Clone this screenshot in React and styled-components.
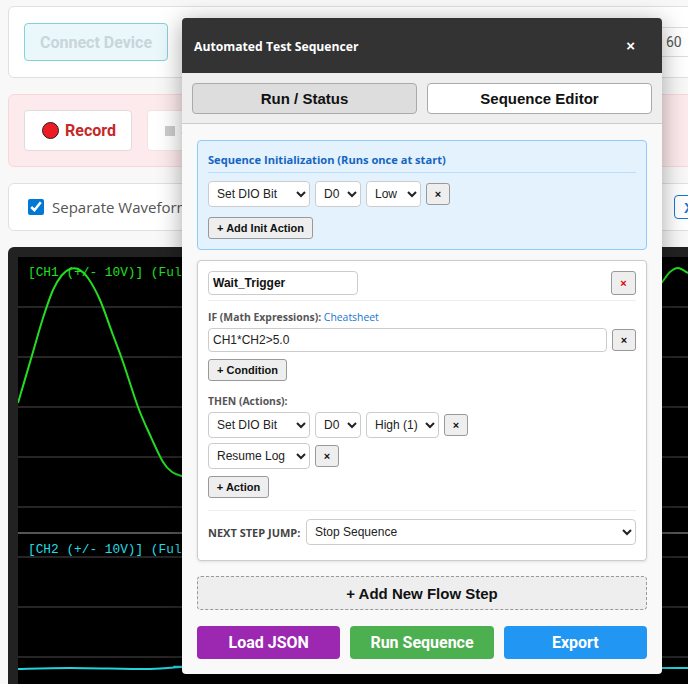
import React from "react";
import styled, { createGlobalStyle } from "styled-components";

const Global = createGlobalStyle`
  * { box-sizing: border-box; }
  html, body { margin: 0; height: 684px; overflow: hidden; background: #f8f8f8; }
  #root { position: relative; width: 688px; height: 684px; overflow: hidden; }
`;

const Page = styled.div`
  display: flex; flex-direction: column; gap: 16px;
  width: 740px; padding: 6px 0 0 8px;
  font-family: "Open Sans", sans-serif;
`;
const Card = styled.section`
  display: flex; align-items: center; justify-content: space-between;
  height: ${p => p.$h}px; padding: 0 15px;
  background: ${p => p.$tint ? "#fdeaec" : "#fff"};
  border: 1px solid ${p => p.$tint ? "#f8d7da" : "#e0e0e0"};
  border-radius: 6px;
`;
const Group = styled.div`display: flex; align-items: center; gap: 15px;`;
const ConnectButton = styled.button`
  width: 144px; height: 38px; padding: 0; background: #ebf8fb; border: 1px solid #84d2da; border-radius: 4px;
  color: #c9d5d9; font: 700 16px Roboto, sans-serif;
`;
const RateInput = styled.div`
  width: 76px; height: 30px; padding: 0 0 0 17px;
  display: flex; align-items: center; border: 1px solid #ddd; color: #555;
  font: 14px Roboto, sans-serif;
`;
const RecordButton = styled.button`
  display: flex; align-items: center; justify-content: flex-start; gap: 6px;
  width: ${p => p.$w}px; height: 41px; padding: 0 0 0 ${p => p.$pad}px; background: #fff;
  border: 1px solid ${p => p.$off ? "#f3e3e4" : "#ddd"}; border-radius: 4px;
  color: ${p => p.$off ? "#ccc" : "#c62828"}; font: 700 16px Roboto, sans-serif;
`;
const RecDot = styled.span`
  flex: none; width: 17px; height: 17px; border-radius: 50%; background: #ed1c24; border: 1px solid #222;
`;
const StopSquare = styled.span`flex: none; width: 10px; height: 10px; background: #ccc;`;
const CheckLabel = styled.label`
  display: flex; align-items: center; gap: 8px; margin-left: 4px;
  font-size: 15px; color: #555; white-space: nowrap;
`;
const Check = styled.input`
  width: 16px; height: 16px; margin: 0; accent-color: #0078d4;
`;
const SmallBlue = styled.button`
  width: 50px; height: 24px; padding: 0 0 0 9px; text-align: left; background: #fff;
  border: 1px solid #1976d2; border-radius: 4px; color: #1976d2;
  font: 700 15px "Liberation Sans", sans-serif;
`;

const Scope = styled.div`
  height: 460px; padding: 10px 0 0 10px; background: #222; border-radius: 6px 6px 0 0;
`;
const Channel = styled.div`
  position: relative; height: ${p => p.$h}px; background: #000;
  border-top: ${p => p.$divided ? "2px solid #555" : "none"};
`;
const ChannelLabel = styled.span`
  position: absolute; left: 10px; top: ${p => p.$top}px;
  font: 12.8px "Liberation Mono", monospace; color: ${p => p.$c}; white-space: pre;
`;
const Trace = styled.svg`display: block;`;

const Modal = styled.div`
  position: absolute; left: 182px; top: 18px; width: 480px; height: 656px;
  display: flex; flex-direction: column; background: #f9f9f9;
  border-radius: 4px; overflow: hidden;
  box-shadow: 0 4px 24px rgba(0,0,0,.35);
  font-family: "Open Sans", sans-serif;
`;
const ModalHeader = styled.header`
  flex: none; height: 55px; padding: 2px 27px 0 12px; display: flex; align-items: center; justify-content: space-between;
  background: #333; color: #fff;
`;
const ModalTitle = styled.h2`margin: 0; font-size: 12.2px; font-weight: 700;`;
const CloseButton = styled.button`
  padding: 0; margin-top: -3px; background: none; border: 0; color: #fff; font: 700 15px "Liberation Sans", sans-serif;
`;
const TabBar = styled.nav`
  flex: none; height: 51px; padding: 10px; display: grid; grid-template-columns: 1fr 1fr; gap: 10px;
  background: #eee; border-bottom: 1px solid #ccc;
`;
const Tab = styled.button`
  height: 31px; padding: 0; background: ${p => p.$active ? "#fff" : "#ddd"};
  border: 1px solid #aaa; border-radius: 4px; color: #111;
  font: 700 15px "Liberation Sans", sans-serif;
`;
const ModalBody = styled.div`
  flex: 1; padding: 16px 15px 15px; display: flex; flex-direction: column;
`;
const InitBox = styled.div`
  height: 110px; padding: 10px; margin-bottom: 10px;
  background: #e3f2fd; border: 1px solid #90caf9; border-radius: 4px;
`;
const InitTitle = styled.div`
  height: 22px; padding-bottom: 5px; margin-bottom: 8px; border-bottom: 1px solid #bbdefb;
  color: #1565c0; font-size: 11.1px; font-weight: 700; line-height: 17px; white-space: nowrap;
`;
const Row = styled.div`
  display: flex; align-items: center; gap: 5px; margin-bottom: ${p => p.$mb ?? 0}px;
`;
const Select = styled.select`
  width: ${p => p.$w}px; height: 26px; padding: 0 4px; background: #fff;
  border: 1px solid #ccc; border-radius: 4px; color: #222;
  font: 12px "Liberation Sans", sans-serif;
`;
const MiniButton = styled.button`
  display: block; flex: none; width: ${p => p.$w || 24}px; height: ${p => p.$tall ? 24 : 22}px; padding: 0; background: #eee;
  border: 1px solid #999; border-radius: 3px; color: ${p => p.$danger ? "#e00000" : "#111"};
  font: 700 11px "Liberation Sans", sans-serif;
`;
const StepCard = styled.div`
  height: 301px; padding: 10px; background: #fff; border: 1px solid #ccc; border-radius: 4px;
  box-shadow: 0 1px 3px rgba(0,0,0,.1);
`;
const StepHead = styled.div`
  display: flex; align-items: center; justify-content: space-between;
  height: 30px; padding-bottom: 5px; margin-bottom: 10px; border-bottom: 1px solid #eee;
`;
const NameInput = styled.input`
  width: 150px; height: 24px; padding: 0 4px; background: #fff; border: 1px solid #ccc; border-radius: 4px;
  color: #111; font: 700 12px "Liberation Sans", sans-serif;
`;
const FieldLabel = styled.div`
  height: 13px; margin: ${p => p.$top ?? 0}px 0 4px; color: #555; font-size: 10.4px; font-weight: 700; line-height: 13px; white-space: nowrap;
`;
const CheatLink = styled.a`color: #1976d2; font-weight: 400; text-decoration: none;`;
const ExprInput = styled.input`
  flex: 1; height: 24px; padding: 0 4px; background: #fff; border: 1px solid #ccc; border-radius: 4px;
  color: #222; font: 12px "Liberation Sans", sans-serif;
`;
const NextRow = styled.div`
  display: flex; align-items: center; justify-content: space-between; margin-top: 12px; padding-top: 8px; border-top: 1px solid #eee;
`;
const NextLabel = styled.span`
  margin-top: 1px; color: #444; font-size: 11px; font-weight: 700; white-space: nowrap;
`;
const AddStep = styled.button`
  flex: none; height: 34px; margin-top: 15px; padding: 0; background: #eee;
  border: 1px dashed #999; border-radius: 4px; color: #111;
  font: 700 15px "Liberation Sans", sans-serif;
`;
const Footer = styled.div`
  display: grid; grid-template-columns: repeat(3, 1fr); gap: 10px; margin-top: 16px;
`;
const ActionButton = styled.button`
  height: 33px; padding: 0; background: ${p => p.$bg}; border: 0; border-radius: 4px; color: #fff;
  font: 700 16px Roboto, sans-serif;
`;

const smooth = pts => {
  let d = `M${pts[0][0]} ${pts[0][1]}`;
  for (let i = 0; i < pts.length - 1; i++) {
    const a = pts[i - 1] || pts[i], b = pts[i], c = pts[i + 1], e = pts[i + 2] || c;
    d += ` C${b[0] + (c[0] - a[0]) / 6} ${b[1] + (c[1] - a[1]) / 6} ${c[0] - (e[0] - b[0]) / 6} ${c[1] - (e[1] - b[1]) / 6} ${c[0]} ${c[1]}`;
  }
  return d;
};

/* points are in channel coordinates (origin: top-left of the black plot) */
const green = [[0,146],[15,95],[25,61],[35,33],[44,18],[52,12],[60,12],[70,21],[82,43],[95,78],[105,105],[120,150],[132,178],[145,205],[154,215],[164,219],[180,222]];
const greenRight = [[640,30],[645,24],[652,15],[660,11],[670,16]];
const cyan = [[0,135],[52,134],[132,135],[164,133],[200,133],[640,134],[670,134]];

const Grid = ({ ys }) => ys.map(y => <line key={y} x1="0" x2="720" y1={y} y2={y} stroke="#262626" strokeWidth="1.8" />);

function ActionSelects({ third, thirdW }) {
  return (
    <>
      <Select $w={102} defaultValue="Set DIO Bit"><option>Set DIO Bit</option></Select>
      <Select $w={46} defaultValue="D0"><option>D0</option></Select>
      <Select $w={thirdW} defaultValue={third}><option>{third}</option></Select>
    </>
  );
}

export default function App() {
  return (
    <>
      <Global />
      <Page>
        <Card $h={72}>
          <ConnectButton>Connect Device</ConnectButton>
          <RateInput>60</RateInput>
        </Card>
        <Card $h={73} $tint>
          <Group>
            <RecordButton $w={108} $pad={17}><RecDot />Record</RecordButton>
            <RecordButton $w={120} $pad={17} $off><StopSquare />Stop</RecordButton>
          </Group>
        </Card>
        <Card $h={48}>
          <CheckLabel><Check type="checkbox" defaultChecked />Separate Waveforms</CheckLabel>
          <SmallBlue>X</SmallBlue>
        </Card>
        <Scope>
          <Channel $h={275}>
            <Trace width="720" height="275">
              <Grid ys={[50, 100, 150, 200, 250]} />
              <path d={smooth(green)} fill="none" stroke="#22dd22" strokeWidth="2" />
              <path d={smooth(greenRight)} fill="none" stroke="#22dd22" strokeWidth="2" />
            </Trace>
            <ChannelLabel $top={8} $c="#1fe01f">[CH1 (+/- 10V)] (Full Scale)</ChannelLabel>
          </Channel>
          <Channel $h={160} $divided>
            <Trace width="720" height="158">
              <Grid ys={[23, 73, 123]} />
              <path d={smooth(cyan)} fill="none" stroke="#22d3dc" strokeWidth="2" />
            </Trace>
            <ChannelLabel $top={8} $c="#22dde6">[CH2 (+/- 10V)] (Full Scale)</ChannelLabel>
          </Channel>
        </Scope>
      </Page>

      <Modal>
        <ModalHeader>
          <ModalTitle>Automated Test Sequencer</ModalTitle>
          <CloseButton>×</CloseButton>
        </ModalHeader>
        <TabBar>
          <Tab $active={false}>Run / Status</Tab>
          <Tab $active>Sequence Editor</Tab>
        </TabBar>
        <ModalBody>
          <InitBox>
            <InitTitle>Sequence Initialization (Runs once at start)</InitTitle>
            <Row $mb={10}>
              <ActionSelects third="Low" thirdW={55} />
              <MiniButton>×</MiniButton>
            </Row>
            <MiniButton $w={105}>+ Add Init Action</MiniButton>
          </InitBox>
          <StepCard>
            <StepHead>
              <NameInput defaultValue="Wait_Trigger" />
              <MiniButton $danger $w={25} $tall>×</MiniButton>
            </StepHead>
            <FieldLabel>IF (Math Expressions): <CheatLink href="#">Cheatsheet</CheatLink></FieldLabel>
            <Row $mb={7}>
              <ExprInput defaultValue="CH1*CH2>5.0" />
              <MiniButton>×</MiniButton>
            </Row>
            <MiniButton $w={79}>+ Condition</MiniButton>
            <FieldLabel $top={14}>THEN (Actions):</FieldLabel>
            <Row $mb={5}>
              <ActionSelects third="High (1)" thirdW={73} />
              <MiniButton>×</MiniButton>
            </Row>
            <Row $mb={7}>
              <Select $w={102} defaultValue="Resume Log"><option>Resume Log</option></Select>
              <MiniButton>×</MiniButton>
            </Row>
            <MiniButton $w={61}>+ Action</MiniButton>
            <NextRow>
              <NextLabel>NEXT STEP JUMP:</NextLabel>
              <Select $w={330} defaultValue="Stop Sequence"><option>Stop Sequence</option></Select>
            </NextRow>
          </StepCard>
          <AddStep>+ Add New Flow Step</AddStep>
          <Footer>
            <ActionButton $bg="#9c27b0">Load JSON</ActionButton>
            <ActionButton $bg="#4caf50">Run Sequence</ActionButton>
            <ActionButton $bg="#2196f3">Export</ActionButton>
          </Footer>
        </ModalBody>
      </Modal>
    </>
  );
}
